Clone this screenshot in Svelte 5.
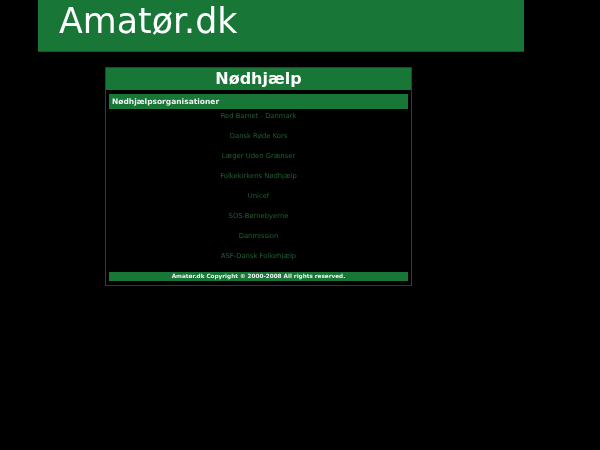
<script lang="ts">
	const links = [
		'Red Barnet - Danmark',
		'Dansk Røde Kors',
		'Læger Uden Grænser',
		'Folkekirkens Nødhjælp',
		'Unicef',
		'SOS-Børnebyerne',
		'Danmission',
		'ASF-Dansk Folkehjælp'
	];
</script>

<div class="page">
	<header class="banner">Amatør.dk</header>

	<main class="panel">
		<h1>Nødhjælp</h1>
		<div class="body">
			<h2>Nødhjælpsorganisationer</h2>
			<ul>
				{#each links as name}
					<li><a href="#top">{name}</a></li>
				{/each}
			</ul>
			<footer>Amatør.dk Copyright © 2000-2008 All rights reserved.</footer>
		</div>
	</main>
</div>

<style>
	:global(body) {
		background: #000;
	}

	.page {
		width: 600px;
		height: 450px;
		padding-left: 38px;
		box-sizing: border-box;
		background: #000;
		font-family: "DejaVu Sans", sans-serif;
		overflow: hidden;
		will-change: transform;
	}

	.banner {
		width: 486px;
		height: 52px;
		box-sizing: border-box;
		padding-left: 21px;
		background: #187637;
		border-bottom: 1px solid #2a4a33;
		color: #fff;
		font-size: 34.8px;
		line-height: 43px;
	}

	.panel {
		width: 307px;
		margin: 15px 0 0 67px;
		box-sizing: border-box;
		border: 1px solid #1d4a2b;
	}

	h1 {
		margin: 0;
		height: 22px;
		background: #187637;
		color: #fff;
		font-size: 16px;
		font-weight: bold;
		line-height: 22px;
		text-align: center;
	}

	.body {
		padding: 3px 2px 4px 3px;
		border-top: 1px solid #000;
	}

	h2 {
		margin: 0;
		width: 299px;
		height: 15px;
		padding-left: 3px;
		box-sizing: border-box;
		background: #187637;
		color: #f2f2f2;
		font-size: 7.5px;
		font-weight: bold;
		line-height: 15px;
	}

	ul {
		margin: 0;
		width: 299px;
		padding: 1px 0 0;
		list-style: none;
	}

	li {
		height: 20px;
		font-size: 6.8px;
		line-height: 12px;
		text-align: center;
	}

	a {
		color: #1f6035;
		text-decoration: none;
	}

	footer {
		margin-top: 2px;
		width: 299px;
		height: 9px;
		background: #187637;
		color: #f2f2f2;
		font-size: 5.7px;
		font-weight: bold;
		line-height: 9px;
		text-align: center;
	}
</style>
